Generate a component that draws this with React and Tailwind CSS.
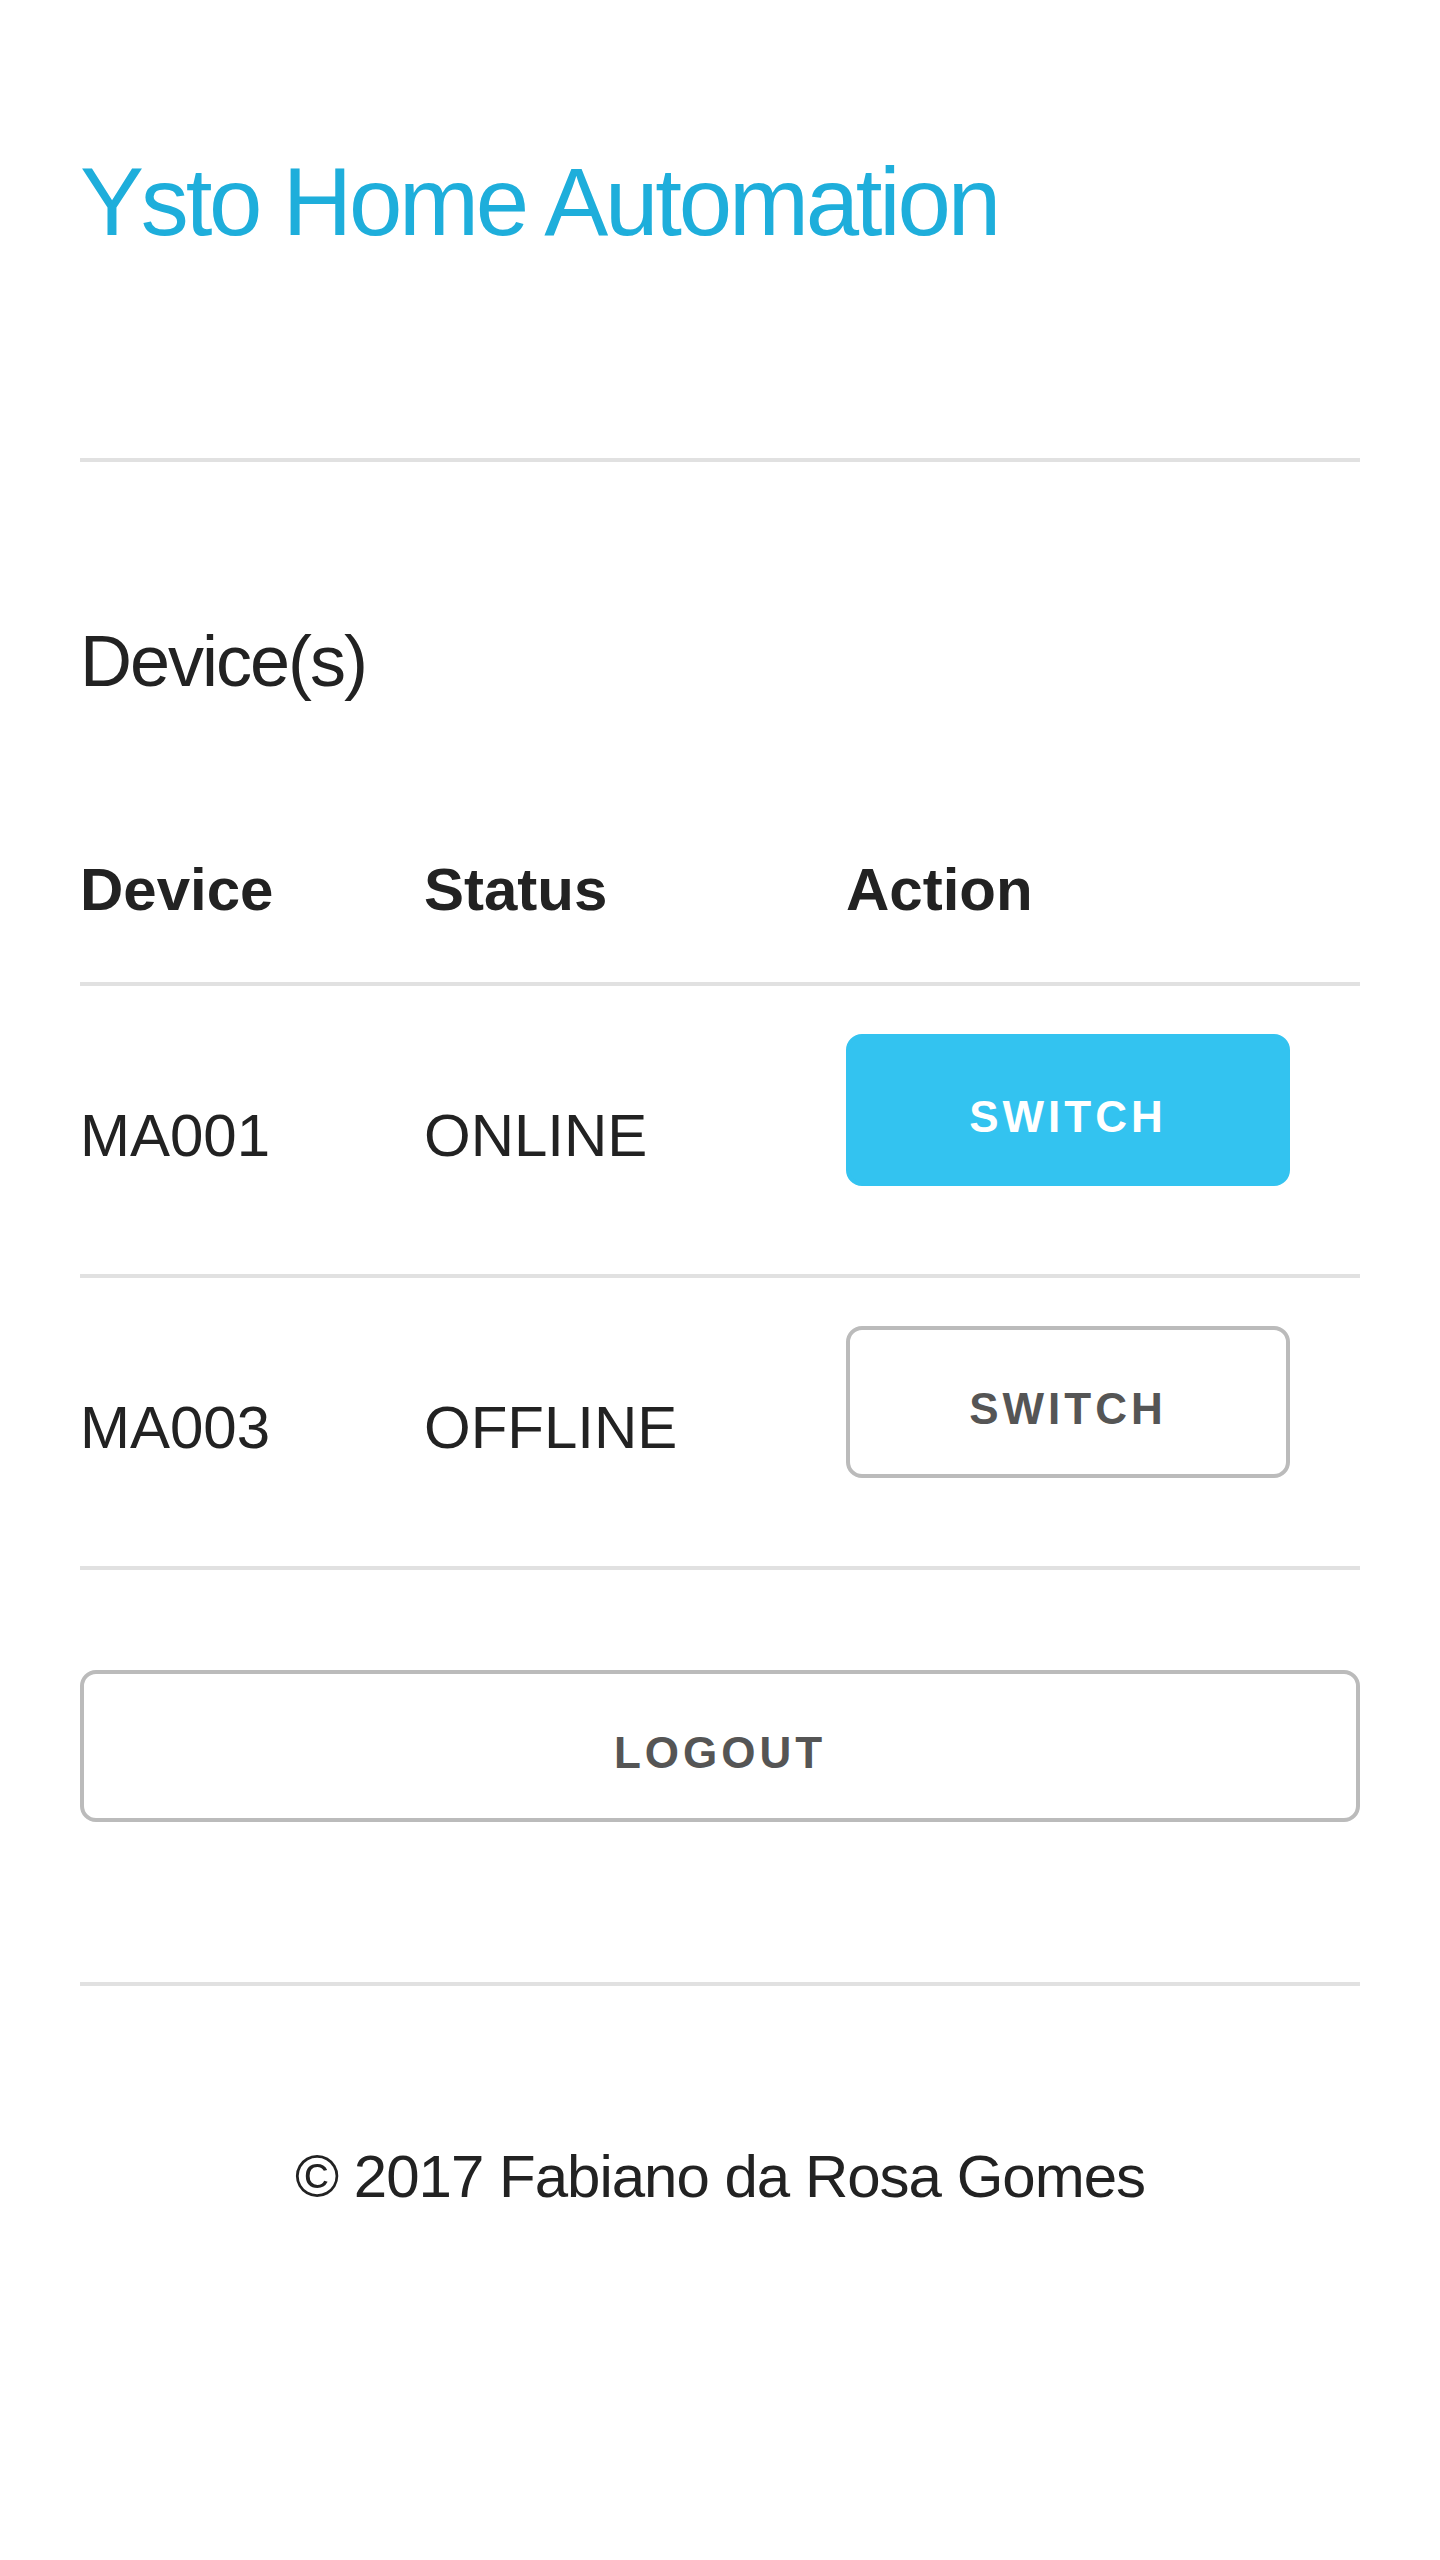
import React from "react";

const devices = [
  { id: "MA001", status: "ONLINE", primary: true },
  { id: "MA003", status: "OFFLINE", primary: false },
];

function Button({ children, primary, full }) {
  const base =
    "h-[152px] rounded-[16px] border-4 pt-[14px] text-[44px] font-semibold uppercase tracking-[4px] leading-[130px] text-center whitespace-nowrap";
  const look = primary
    ? "bg-[#33C3F0] border-[#33C3F0] text-white"
    : "bg-transparent border-[#bbbbbb] text-[#555555]";
  const width = full ? "w-full" : "w-[444px]";
  return <button className={`${base} ${look} ${width}`}>{children}</button>;
}

export default function App() {
  return (
    <div
      className="min-h-[2560px] w-full bg-white text-[#222222]"
      style={{ fontFamily: '"Liberation Sans", Arial, Helvetica, sans-serif' }}
    >
      <div className="flex flex-col px-[80px] pt-[137px]">
        <h4 className="text-[96px] leading-[130px] tracking-[-3.2px] font-normal text-[#1EAEDB]">
          Ysto Home Automation
        </h4>

        <div className="mt-[191px] h-[4px] bg-[#E1E1E1]" />

        <h5 className="mt-[145px] text-[72px] leading-[108px] tracking-[-2px] font-normal">
          Device(s)
        </h5>

        <div className="mt-[75px] flex flex-col">
          <div className="flex h-[196px] border-b-4 border-[#E1E1E1] text-[60px] leading-[96px] font-bold">
            <div className="w-[344px] pt-[52px]">Device</div>
            <div className="w-[422px] pt-[52px]">Status</div>
            <div className="flex-1 pt-[52px]">Action</div>
          </div>
          {devices.map((d) => (
            <div
              key={d.id}
              className="flex h-[292px] border-b-4 border-[#E1E1E1] text-[60px] leading-[96px]"
            >
              <div className="w-[344px] pt-[102px]">{d.id}</div>
              <div className="w-[422px] pt-[102px]">{d.status}</div>
              <div className="flex-1 pt-[48px]">
                <Button primary={d.primary}>Switch</Button>
              </div>
            </div>
          ))}
        </div>

        <div className="mt-[100px]">
          <Button full>Logout</Button>
        </div>

        <div className="mt-[160px] h-[4px] bg-[#E1E1E1]" />

        <p className="mt-[143px] text-center text-[60px] leading-[96px] tracking-[-1px]">
          © 2017 Fabiano da Rosa Gomes
        </p>
      </div>
    </div>
  );
}
